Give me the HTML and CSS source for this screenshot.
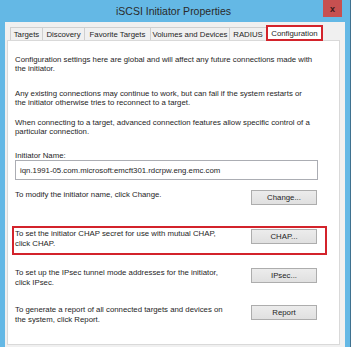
FILE: index.html
```html
<!DOCTYPE html>
<html>
    <head>
        <meta charset="UTF-8">
        <title>iSCSI Initiator Properties</title>
        <link rel="stylesheet" href="styles.css">
    </head>
    <body>
        <div class="window">
            <div class="title-bar">
                <span class="title">iSCSI Initiator Properties</span>
                <div class="close">x</div>
            </div>

            <div class="client">
                <div class="tabs">
                    <div class="tab tab-targets">Targets</div>
                    <div class="tab tab-discovery">Discovery</div>
                    <div class="tab tab-favorite">Favorite Targets</div>
                    <div class="tab tab-volumes">Volumes and Devices</div>
                    <div class="tab tab-radius">RADIUS</div>
                    <div class="tab tab-config selected">Configuration</div>
                </div>

                <div class="panel">
                    <p>Configuration settings here are global and will affect any future connections made with<br>the initiator.</p>
                    <p class="p2">Any existing connections may continue to work, but can fail if the system restarts or<br>the initiator otherwise tries to reconnect to a target.</p>
                    <p class="p3">When connecting to a target, advanced connection features allow specific control of a<br>particular connection.</p>

                    <p class="label">Initiator Name:</p>
                    <div class="name-box">iqn.1991-05.com.microsoft:emcft301.rdcrpw.eng.emc.com</div>

                    <div class="row row-change">
                        <p>To modify the initiator name, click Change.</p>
                        <button>Change...</button>
                    </div>

                    <div class="row row-chap">
                        <p>To set the initiator CHAP secret for use with mutual CHAP,<br>click CHAP.</p>
                        <button>CHAP...</button>
                    </div>

                    <div class="row row-ipsec">
                        <p>To set up the IPsec tunnel mode addresses for the initiator,<br>click IPsec.</p>
                        <button>IPsec...</button>
                    </div>

                    <div class="row row-report">
                        <p>To generate a report of all connected targets and devices on<br>the system, click Report.</p>
                        <button>Report</button>
                    </div>
                </div>
            </div>
        </div>
    </body>
</html>
```

FILE: styles.css
```css
html {
    width: 100%;
    height: 100%;
}

body {
    margin: 0;
    background: #64b8e5;
    font-family: "Liberation Sans", Arial, sans-serif;
    font-size: 7.8px;
    color: #1e1e1e;
    overflow: hidden;
}

.window {
    width: 350px;
    height: 347px;
    border-right: 1px solid #3f7190;
    display: flex;
    flex-direction: column;
}

.title-bar {
    height: 22px;
    flex-shrink: 0;
    position: relative;
    display: flex;
    align-items: center;
    justify-content: center;
    padding-right: 3px;
}

.title {
    font-size: 10.5px;
    color: #2a2a2a;
}

.close {
    position: absolute;
    left: 323px;
    top: 0;
    width: 19px;
    height: 17px;
    background: #c75050;
    color: #3a1a1a;
    font-weight: bold;
    font-size: 9px;
    display: flex;
    align-items: center;
    justify-content: center;
}

.client {
    flex: 1;
    background: #f0f0f0;
    margin: 0 5px;
    padding: 3px 5px 2px 2px;
    display: flex;
    flex-direction: column;
}

.tabs {
    height: 15px;
    flex-shrink: 0;
    display: flex;
    align-items: flex-start;
    padding-left: 3px;
}

.tab {
    box-sizing: border-box;
    height: 13px;
    margin-top: 2px;
    margin-right: -1px;
    border: 1px solid #cfcfcf;
    border-bottom: none;
    background: #f0f0f0;
    display: flex;
    align-items: center;
    justify-content: center;
    white-space: nowrap;
}

.tab-targets { width: 33px; }
.tab-discovery { width: 43px; }
.tab-favorite { width: 67px; }
.tab-volumes { width: 80px; }
.tab-radius { width: 38px; }
.tab-config { width: 57px; }

.tab.selected {
    position: relative;
    z-index: 1;
    height: 16px;
    margin-top: 0;
    border: 2px solid #d3232b;
    background: white;
}

.panel {
    flex: 1;
    background: white;
    border: 1px solid #d9d9d9;
    padding: 13.5px 22px 0 7px;
}

p {
    margin: 0;
    line-height: 9.5px;
    white-space: nowrap;
}

.p2 {
    margin-top: 15px;
}

.p3 {
    margin-top: 10px;
}

.label {
    margin-top: 14px;
}

.name-box {
    box-sizing: border-box;
    height: 20px;
    margin-right: -1px;
    border: 1px solid #abadb3;
    padding-left: 4px;
    display: flex;
    align-items: center;
}

.row {
    display: flex;
    justify-content: space-between;
    align-items: flex-start;
}

.row-change {
    margin-top: 10px;
}

.row-chap {
    margin: 21px -10px 0 -3px;
    border: 2px solid #d3232b;
    padding: 1px 8px 5px 1px;
}

.row-ipsec {
    margin-top: 13px;
}

.row-report {
    margin-top: 18px;
}

button {
    box-sizing: border-box;
    width: 66px;
    height: 15px;
    padding: 0;
    border: 1px solid #adadad;
    background: linear-gradient(#ececec, #e0e0e0);
    font-family: inherit;
    font-size: 7.8px;
    color: #1e1e1e;
}
```
